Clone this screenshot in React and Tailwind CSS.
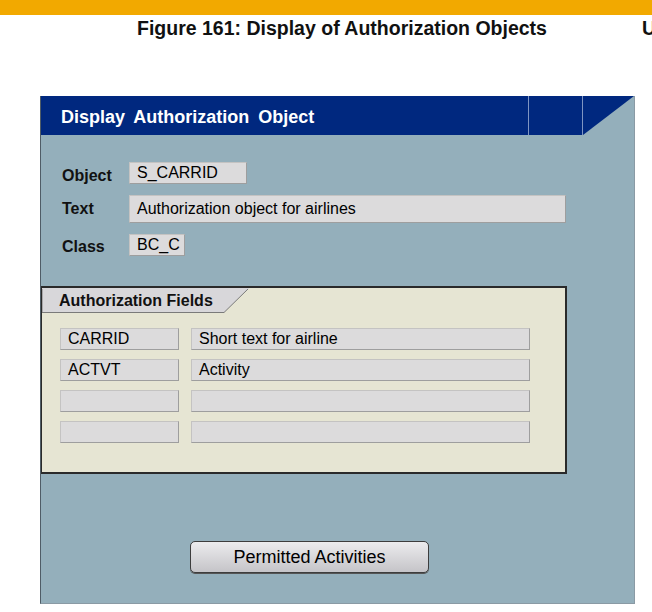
import React from "react";

const field = "bg-[#dcdbdc] border border-[#c4c3c2] border-r-[#9e9e9e] border-b-[#9e9e9e] text-[16px] text-black leading-none flex items-center pl-[7px] whitespace-nowrap";
const label = "w-[67px] font-bold text-[16px] leading-none text-[#111]";
const narrow = { fontFamily: '"Liberation Sans Narrow", "Arial Narrow", "Liberation Sans", sans-serif' };

export default function App() {
  return (
    <div className="w-[652px] h-[612px] bg-white overflow-hidden" style={{ fontFamily: '"Liberation Sans", Arial, sans-serif' }}>
      <div className="h-[15px] bg-[#f2a900]" />
      <div className="h-[81px] flex overflow-hidden whitespace-nowrap">
        <div className="w-[642px] shrink-0 pl-[137px] pt-[2px]">
          <span className="text-[19.5px] leading-[23px] font-bold text-[#111]" style={narrow}>
            Figure 161: Display of Authorization Objects
          </span>
        </div>
        <div className="shrink-0 pt-[2px] text-[19.5px] leading-[23px] font-bold text-[#111]" style={narrow}>
          U
        </div>
      </div>

      <div className="ml-[40px] w-[595px] h-[508px] bg-[#94afbb] border border-t-0 border-[#8a9aa4] border-l-[#4f5c66] flex flex-col">
        <div className="h-[39px] flex shrink-0">
          <div className="flex-1 bg-[#00287f] pl-[20px] pt-[10px] text-white font-bold text-[18px] leading-[22px] [word-spacing:4px] whitespace-nowrap">
            Display Authorization Object
          </div>
          <div className="w-[54px] bg-[#00287f] border-l border-[#7f95c2]" />
          <div className="w-[52px] border-l border-[#7f95c2] relative">
            <svg className="absolute inset-0" width="51" height="39" viewBox="0 0 51 39">
              <polygon points="0,0 51,0 0,39" fill="#00287f" />
            </svg>
          </div>
        </div>

        <div className="pl-[21px] pt-[27px] flex flex-col gap-[11px]">
          <div className="flex items-center">
            <div className={`${label} pt-[5px]`}>Object</div>
            <div className={`${field} w-[118px] h-[22px]`}>S_CARRID</div>
          </div>
          <div className="flex items-center">
            <div className={label}>Text</div>
            <div className={`${field} w-[437px] h-[28px]`}>Authorization object for airlines</div>
          </div>
          <div className="flex items-center">
            <div className={`${label} pt-[3px]`}>Class</div>
            <div className={`${field} w-[56px] h-[22px]`}>BC_C</div>
          </div>
        </div>

        <div className="mt-[30px] w-[526px] h-[188px] bg-[#e6e5d3] border-2 border-l border-[#2a2a2a] flex flex-col">
          <div className="relative w-[207px] h-[25px] shrink-0">
            <svg className="absolute inset-0" width="207" height="25" viewBox="0 0 207 25">
              <polygon points="0,0 207,0 182,24.5 0,24.5" fill="#d8d7da" stroke="#7a7a7a" strokeWidth="1" />
              <rect x="0" y="0" width="207" height="1" fill="#d8d7da" />
            </svg>
            <div className="relative pl-[17px] pt-[3px] font-bold text-[16px] leading-[19px] text-[#111] whitespace-nowrap">Authorization Fields</div>
          </div>
          <div className="pl-[18px] pt-[15px] flex flex-col gap-[9px]">
            {[["CARRID", "Short text for airline"], ["ACTVT", "Activity"], ["", ""], ["", ""]].map((r, i) => (
              <div key={i} className="flex gap-[12px]">
                <div className={`${field} w-[119px] h-[22px]`}>{r[0]}</div>
                <div className={`${field} w-[339px] h-[22px]`}>{r[1]}</div>
              </div>
            ))}
          </div>
        </div>

        <div className="mt-[67px] ml-[149px]">
          <div className="w-[239px] h-[32px] rounded-[5px] border border-[#3d3d3d] bg-gradient-to-b from-[#ececee] to-[#c5c4c8] flex items-center justify-center text-[18px] text-black shadow-[0_1px_0_#555]">
            Permitted Activities
          </div>
        </div>
      </div>
    </div>
  );
}
